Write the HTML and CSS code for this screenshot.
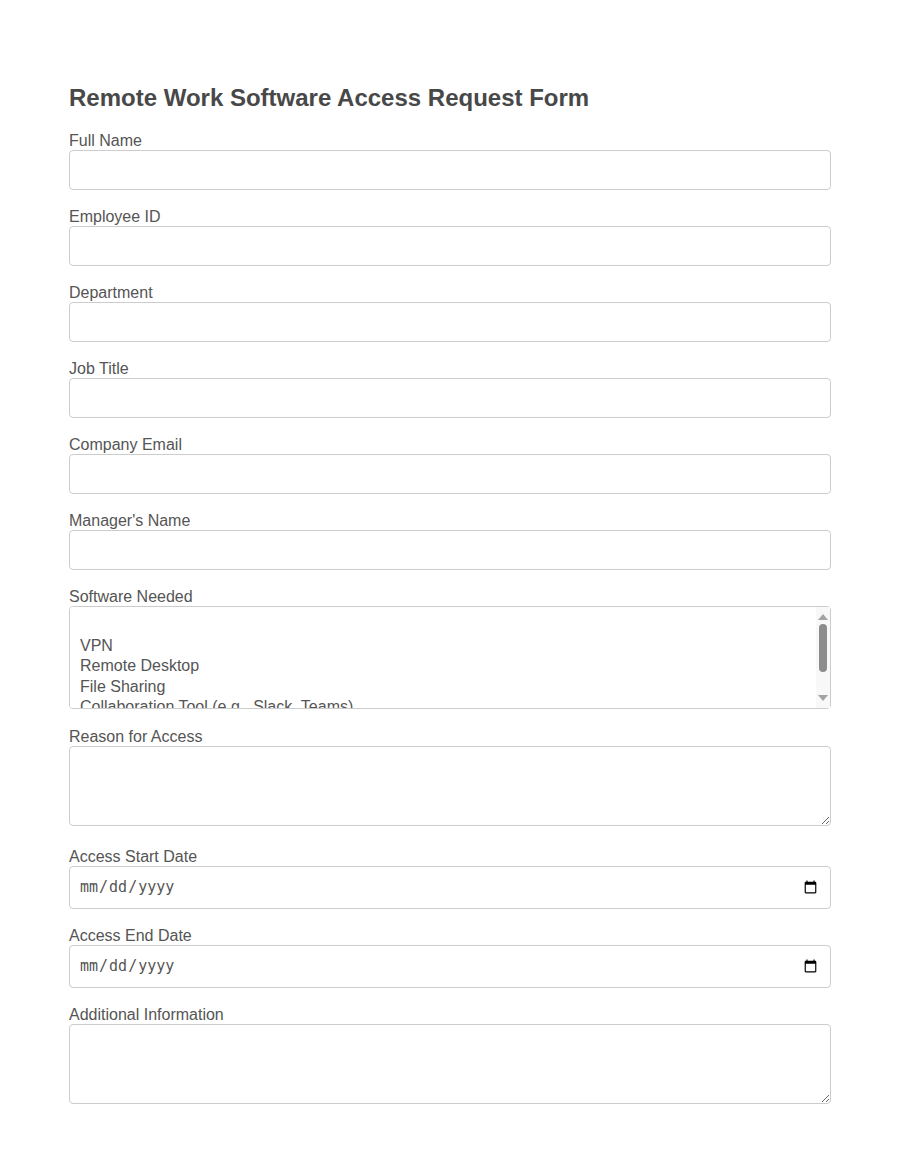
FILE: index.html
```html
<!DOCTYPE html>
<html lang="en">
<head>
    <meta charset="UTF-8">
    <meta name="viewport" content="width=device-width, initial-scale=1.0">
    <title>Remote Work Software Access Request Form</title>
    <link rel="stylesheet" href="styles.css">
</head>
<body>
    <div class="container">
        <h2>Remote Work Software Access Request Form</h2>
        <form id="accessForm">
            <div class="form-group">
                <label for="fullName">Full Name</label>
                <input type="text" id="fullName" name="fullName" required>
            </div>
            <div class="form-group">
                <label for="employeeId">Employee ID</label>
                <input type="text" id="employeeId" name="employeeId" required>
            </div>
            <div class="form-group">
                <label for="department">Department</label>
                <input type="text" id="department" name="department" required>
            </div>
            <div class="form-group">
                <label for="jobTitle">Job Title</label>
                <input type="text" id="jobTitle" name="jobTitle" required>
            </div>
            <div class="form-group">
                <label for="email">Company Email</label>
                <input type="email" id="email" name="email" required>
            </div>
            <div class="form-group">
                <label for="manager">Manager's Name</label>
                <input type="text" id="manager" name="manager" required>
            </div>
            <div class="form-group">
                <label for="software">Software Needed</label>
                <div class="select-wrap">
                    <select id="software" name="software" multiple required>
                        <option value=""></option>
                        <option value="VPN">VPN</option>
                        <option value="Remote Desktop">Remote Desktop</option>
                        <option value="File Sharing">File Sharing</option>
                        <option value="Collaboration Tool">Collaboration Tool (e.g., Slack, Teams)</option>
                        <option value="Project Management">Project Management Tool</option>
                        <option value="Other">Other</option>
                    </select>
                    <div class="scrollbar" aria-hidden="true">
                        <span class="arrow-up"></span>
                        <span class="thumb"></span>
                        <span class="arrow-down"></span>
                    </div>
                </div>
            </div>
            <div class="form-group">
                <label for="reason">Reason for Access</label>
                <textarea id="reason" name="reason" required></textarea>
            </div>
            <div class="form-group">
                <label for="startDate">Access Start Date</label>
                <input type="date" id="startDate" name="startDate" required>
            </div>
            <div class="form-group">
                <label for="endDate">Access End Date</label>
                <input type="date" id="endDate" name="endDate" required>
            </div>
            <div class="form-group">
                <label for="additional">Additional Information</label>
                <textarea id="additional" name="additional"></textarea>
            </div>
        </form>
    </div>
</body>
</html>
```

FILE: styles.css
```css
body {
    font-family: "Liberation Sans", Arial, sans-serif;
    margin: 0;
    padding: 0;
    background: #fff;
    color: #555;
}
.container {
    max-width: 762px;
    margin: 0 auto;
    padding: 84px 0 40px;
}
h2 {
    font-size: 24px;
    margin: 0 0 20px;
    color: #484848;
}
.form-group {
    margin-bottom: 18px;
}
label {
    display: block;
    font-size: 16px;
    color: #555;
}
input, select, textarea {
    width: 100%;
    box-sizing: border-box;
    padding: 10px;
    border: 1px solid #ccc;
    border-radius: 4px;
    font-family: "Liberation Sans", Arial, sans-serif;
    font-size: 16px;
    color: #555;
    background: #fff;
}
select {
    padding-left: 8px;
    height: 103px;
}
textarea {
    height: 80px;
}
input[type="date"] {
    font-family: "DejaVu Sans Mono", monospace;
    font-size: 15px;
    padding: 10px 10px 11px 9px;
}

/* drawn list scrollbar (the browser hides the real one) */
.select-wrap {
    position: relative;
}
.scrollbar {
    position: absolute;
    top: 1px;
    right: 1px;
    width: 14px;
    height: 101px;
    background: #f8f8f8;
    display: flex;
    flex-direction: column;
    align-items: center;
    padding: 7px 0 7px;
    box-sizing: border-box;
}
.arrow-up, .arrow-down {
    width: 0;
    height: 0;
    border-left: 5px solid transparent;
    border-right: 5px solid transparent;
}
.arrow-up {
    border-bottom: 6px solid #a3a3a3;
}
.arrow-down {
    border-top: 6px solid #a3a3a3;
    margin-top: auto;
}
.thumb {
    width: 8px;
    height: 48px;
    margin-top: 4px;
    border-radius: 4px;
    background: #8c8c8c;
}
```
